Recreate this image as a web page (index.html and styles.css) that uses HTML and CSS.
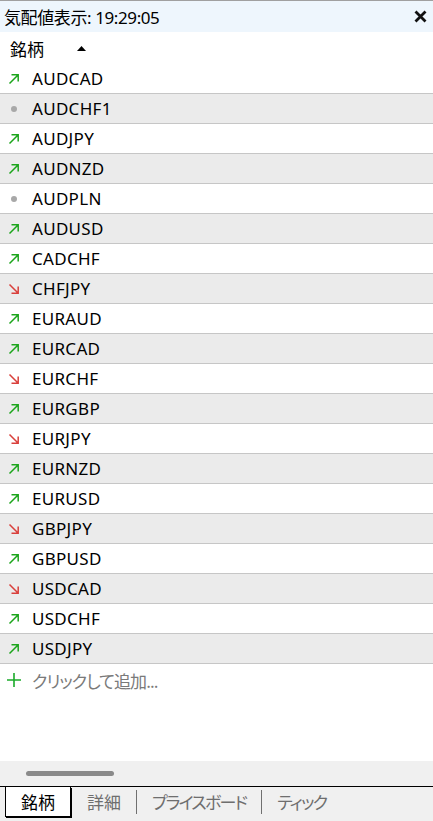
FILE: index.html
```html
<!DOCTYPE html>
<html lang="ja">
<head>
<meta charset="utf-8">
<link rel="stylesheet" href="styles.css">
</head>
<body>
<div class="panel">
  <div class="titlebar">
    <span class="title">気配値表示: 19:29:05</span>
    <svg class="close" width="13" height="13" viewBox="0 0 13 13"><path d="M1.5 1.5L11.5 11.5M11.5 1.5L1.5 11.5" stroke="#111" stroke-width="2.8" stroke-linecap="butt"/></svg>
  </div>
  <div class="header">
    <span class="hname">銘柄</span>
    <svg class="sort" width="9" height="5" viewBox="0 0 9 5"><path d="M0 5L4.5 0L9 5Z" fill="#000"/></svg>
  </div>
  <div class="list" id="list"></div>
  <div class="add">
    <svg class="plus" width="14" height="14" viewBox="0 0 14 14"><path d="M7 0V14M0 7H14" stroke="#1bab2a" stroke-width="1.6"/></svg>
    <span>クリックして追加...</span>
  </div>
  <div class="spacer"></div>
  <div class="bottom">
    <div class="scrollrow"><div class="thumb"></div></div>
    <div class="tabs">
      <div class="tab active">銘柄</div>
      <div class="tab">詳細</div>
      <div class="sep"></div>
      <div class="tab kana">プライスボード</div>
      <div class="sep"></div>
      <div class="tab kana">ティック</div>
    </div>
  </div>
</div>
<script>
var rows = [
  ["AUDCAD","up"],["AUDCHF1","dot"],["AUDJPY","up"],["AUDNZD","up"],["AUDPLN","dot"],
  ["AUDUSD","up"],["CADCHF","up"],["CHFJPY","down"],["EURAUD","up"],["EURCAD","up"],
  ["EURCHF","down"],["EURGBP","up"],["EURJPY","down"],["EURNZD","up"],["EURUSD","up"],
  ["GBPJPY","down"],["GBPUSD","up"],["USDCAD","down"],["USDCHF","up"],["USDJPY","up"]
];
var up = '<svg width="12" height="12" viewBox="0 0 12 12"><path d="M1.5 10.5L10 2M3.5 1.8H10.2V8.5" fill="none" stroke="#1ca51c" stroke-width="1.5"/></svg>';
var down = '<svg width="12" height="12" viewBox="0 0 12 12"><path d="M1.5 1.5L10 10M3.5 10.2H10.2V3.5" fill="none" stroke="#d9403c" stroke-width="1.5"/></svg>';
var dot = '<svg width="12" height="12" viewBox="0 0 12 12"><circle cx="6" cy="6" r="3" fill="#a8a8a8"/></svg>';
var html = "";
rows.forEach(function(r, i){
  var ic = r[1]==="up"?up:(r[1]==="down"?down:dot);
  html += '<div class="row'+(i%2?' alt':'')+'"><span class="icon">'+ic+'</span><span class="sym">'+r[0]+'</span></div>';
});
document.getElementById("list").innerHTML = html;
</script>
</body>
</html>
```

FILE: styles.css
```css
html, body {
  margin: 0;
  padding: 0;
  background: #fff;
}
body {
  font-family: "Noto Sans", "Noto Sans CJK JP", sans-serif;
  color: #000;
  font-feature-settings: "palt";
}
.panel {
  width: 433px;
  height: 821px;
  display: flex;
  flex-direction: column;
  border-top: 1px solid #a0a0a0;
  box-sizing: border-box;
}
.titlebar {
  height: 31px;
  background: #eef6fd;
  display: flex;
  align-items: center;
  justify-content: space-between;
  padding: 0 6px 0 4px;
  flex: none;
}
.title {
  font-size: 17px;
  letter-spacing: -0.4px;
}
.close {
  display: block;
}
.header {
  height: 32px;
  display: flex;
  align-items: center;
  padding-left: 10px;
  flex: none;
}
.hname {
  font-size: 17px;
  font-family: "Noto Sans CJK JP", sans-serif;
}
.sort {
  margin-left: 33px;
  display: block;
}
.list {
  flex: none;
}
.row {
  height: 29px;
  border-bottom: 1px solid #c6c6c6;
  display: flex;
  align-items: center;
  background: #fff;
}
.row.alt {
  background: #ebebeb;
}
.icon {
  width: 12px;
  height: 12px;
  margin-left: 8px;
  margin-right: 12px;
  display: block;
}
.icon svg {
  display: block;
}
.sym {
  font-size: 17px;
  letter-spacing: 0.3px;
}
.add {
  height: 32px;
  display: flex;
  align-items: center;
  padding-left: 7px;
  color: #7a7a7a;
  font-size: 17px;
  font-family: "Noto Sans CJK JP", sans-serif;
  letter-spacing: -0.9px;
  flex: none;
}
.plus {
  display: block;
  margin-right: 11px;
}
.spacer {
  flex: 1;
}
.bottom {
  height: 60px;
  background: #f0f0f0;
  flex: none;
  display: flex;
  flex-direction: column;
}
.scrollrow {
  height: 25px;
  padding-left: 26px;
  display: flex;
  align-items: center;
}
.thumb {
  width: 88px;
  height: 5px;
  border-radius: 3px;
  background: #8a8a8a;
}
.tabs {
  border-top: 1px solid #000;
  display: flex;
  align-items: flex-start;
  height: 34px;
  padding-left: 5px;
}
.tab {
  font-size: 17px;
  font-family: "Noto Sans CJK JP", sans-serif;
  color: #6e6e6e;
  height: 29px;
  display: flex;
  align-items: center;
  padding: 0 15px;
}
.tab.kana {
  letter-spacing: -1.8px;
}
.tab.active {
  background: #fff;
  color: #000;
  border: 1px solid #000;
  border-top: none;
  box-shadow: 1px 1px 0 #000;
  width: 66px;
  box-sizing: border-box;
  justify-content: center;
  height: 30px;
  padding: 0;
  margin-right: 1px;
}
.sep {
  width: 1px;
  height: 24px;
  background: #707070;
  margin-top: 3px;
}
```
